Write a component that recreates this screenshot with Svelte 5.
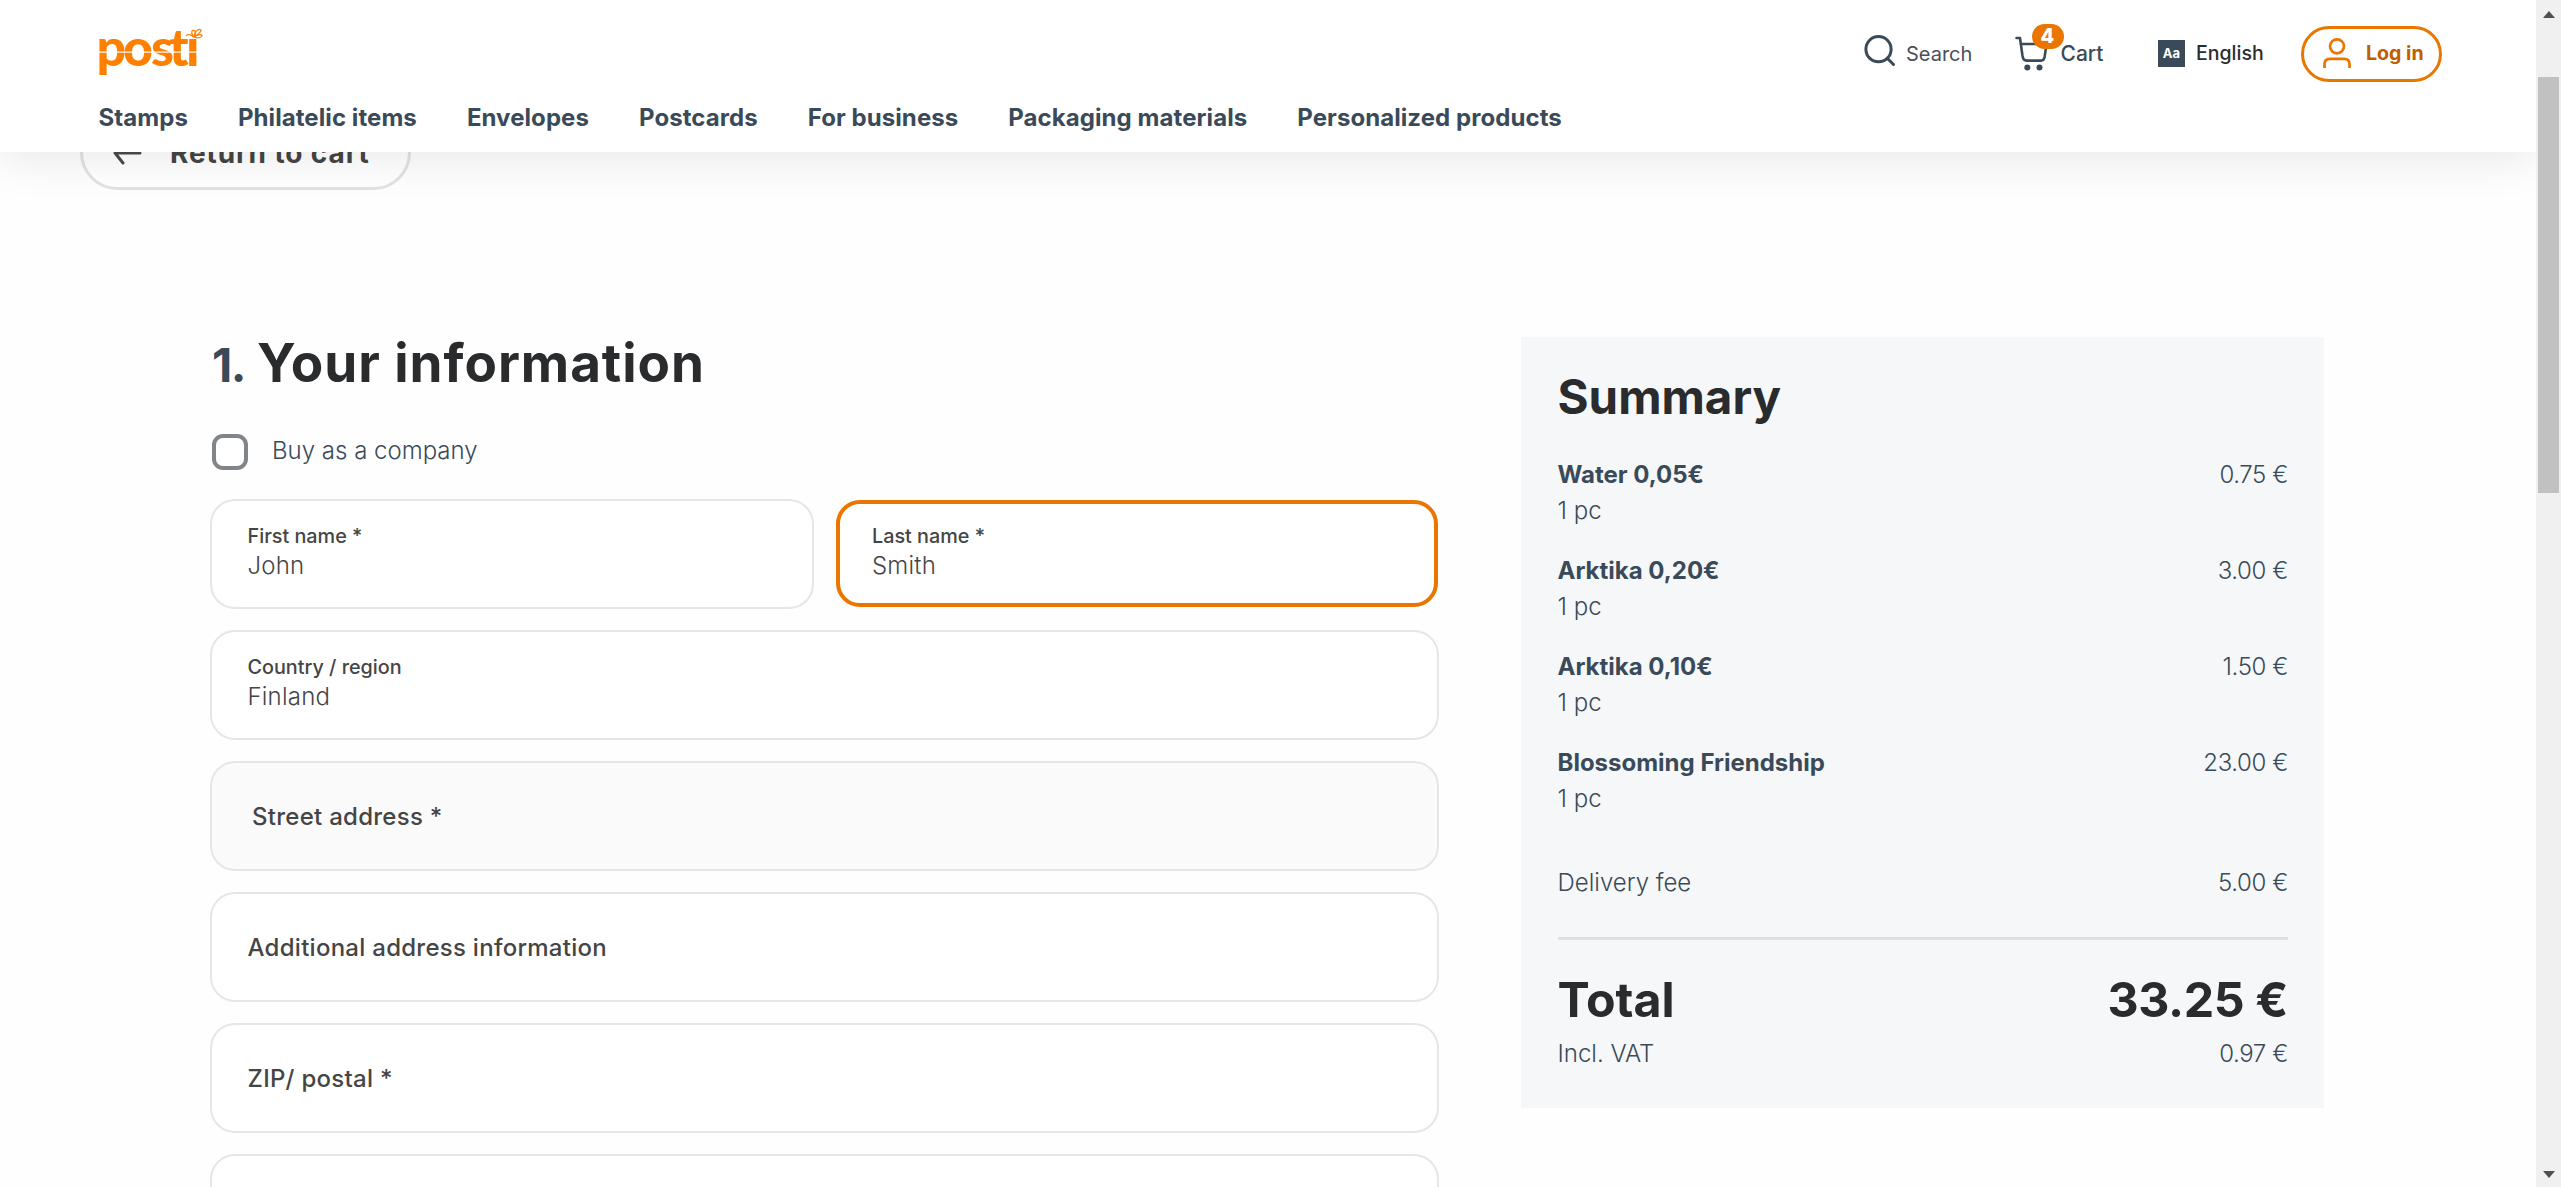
<script>
  const nav = [
    'Stamps',
    'Philatelic items',
    'Envelopes',
    'Postcards',
    'For business',
    'Packaging materials',
    'Personalized products',
  ];

  const items = [
    { name: 'Water 0,05€', qty: '1 pc', price: '0.75 €' },
    { name: 'Arktika 0,20€', qty: '1 pc', price: '3.00 €' },
    { name: 'Arktika 0,10€', qty: '1 pc', price: '1.50 €' },
    { name: 'Blossoming Friendship', qty: '1 pc', price: '23.00 €' },
  ];
</script>

<div class="viewport">
  <div class="page">
    <header>
      <div class="top">
        <svg class="logo" width="112" height="86" viewBox="-2 -16 112 86" aria-label="posti">
          <text class="wordmark" x="-2.5 24 52 70 87" y="43.500">posti</text>
          <rect x="89" y="-4" width="20" height="18.5" fill="#fff" />
          <rect x="-2" y="29.500" width="112" height="1.200" fill="#fff" />
          <g fill="none" stroke="#ff8000" stroke-width="1.300">
            <path d="M95 15 C91 10 93 7 96 9 C97 11 96 14 95 15" />
            <path d="M95 15 C99 12 103 12 103 14 C101 17 98 16 95 15" />
            <path d="M95 15 C95 10 99 6 102 8 C102 11 98 13 95 15" />
            <path d="M95 15 C92 12 88 12 87 14" />
          </g>
        </svg>

        <div class="tools">
          <a class="search" href="#search">
            <svg width="32" height="32" viewBox="0 0 32 32" fill="none" stroke="#3a4a58" stroke-width="3">
              <circle cx="14.500" cy="14.200" r="12.600" />
              <path d="M23.500 23.500 L29.500 29.500" stroke-linecap="round" />
            </svg>
            <span>Search</span>
          </a>
          <a class="cart" href="#cart">
            <span class="cart-icon">
              <svg width="34" height="36" viewBox="0 0 34 36" fill="none" stroke="#3a4a58" stroke-width="2.600" stroke-linecap="round" stroke-linejoin="round">
                <path d="M1.500 2 H5 L7.500 20 Q8.300 24.600 11.500 24.600 H26 Q29 24.600 29.700 20.500 L31.500 8 H6" />
                <circle cx="12.300" cy="31.500" r="3" fill="#3a4a58" stroke="none" />
                <circle cx="24.500" cy="31.500" r="3" fill="#3a4a58" stroke="none" />
              </svg>
              <b class="badge">4</b>
            </span>
            <span>Cart</span>
          </a>
          <a class="language" href="#language">
            <span class="glyph">Aa</span>
            <span>English</span>
          </a>
          <a class="login" href="#login">
            <svg width="30" height="32" viewBox="0 0 30 32" fill="none" stroke="#ea7600" stroke-width="2.700" stroke-linecap="butt">
              <circle cx="15" cy="9.300" r="7" />
              <path d="M2.500 31 V27 Q2.500 21.800 7.700 21.800 H22.300 Q27.500 21.800 27.500 27 V31" />
            </svg>
            <span>Log in</span>
          </a>
        </div>
      </div>
      <nav>
        {#each nav as label}<a href="#nav">{label}</a>{/each}
      </nav>
    </header>

    <main>
      <a class="return" href="#back">
        <svg width="30" height="24" viewBox="0 0 30 24" fill="none" stroke="#4a4a4a" stroke-width="3" stroke-linecap="round" stroke-linejoin="round">
          <path d="M27 12 H2 M10 2 L2 12 L10 22" />
        </svg>
        <span>Return to cart</span>
      </a>

      <div class="columns">
        <section class="form">
          <h1><span class="step">1.</span><span>Your information</span></h1>
          <div class="company"><span class="checkbox"></span><span>Buy as a company</span></div>
          <div class="fields">
            <div class="pair">
              <div class="field filled"><small>First name *</small><span class="value">John</span></div>
              <div class="field filled focused"><small>Last name *</small><span class="value">Smith</span></div>
            </div>
            <div class="field filled"><small>Country / region</small><span class="value">Finland</span></div>
            <div class="field hovered"><span class="placeholder">Street address *</span></div>
            <div class="field"><span class="placeholder">Additional address information</span></div>
            <div class="field"><span class="placeholder">ZIP/ postal *</span></div>
            <div class="field"></div>
          </div>
        </section>

        <aside>
          <h2>Summary</h2>
          <div class="items">
            {#each items as item}
              <div class="item">
                <div><b>{item.name}</b><span>{item.qty}</span></div>
                <span>{item.price}</span>
              </div>
            {/each}
          </div>
          <div class="row delivery"><span>Delivery fee</span><span>5.00 €</span></div>
          <div class="row total"><span>Total</span><span>33.25 €</span></div>
          <div class="row"><span>Incl. VAT</span><span>0.97 €</span></div>
        </aside>
      </div>
    </main>
  </div>

  <div class="scrollbar">
    <svg width="12" height="7" viewBox="0 0 12 7"><path d="M0 7 L6 0 L12 7 Z" fill="#505050" /></svg>
    <div class="thumb"></div>
    <svg width="12" height="7" viewBox="0 0 12 7"><path d="M0 0 L6 7 L12 0 Z" fill="#505050" /></svg>
  </div>
</div>

<style>
  :global(body) {
    background: #fefefe;
  }

  .viewport {
    display: flex;
    height: 1187px;
    overflow: hidden;
    background: #fefefe;
    font-family: Inter, 'Liberation Sans', sans-serif;
    font-size: 24px;
    font-weight: 350;
    line-height: 36px;
    color: #3a4a58;
  }

  .viewport :global(*) {
    box-sizing: border-box;
  }

  a {
    color: inherit;
    text-decoration: none;
    white-space: nowrap;
  }

  b {
    font-weight: 700;
  }

  svg {
    display: block;
    flex: none;
  }

  .page {
    width: 2536px;
    height: 1187px;
    overflow: hidden;
  }

  /* Header */
  header {
    position: relative;
    z-index: 1;
    height: 152px;
    background: #fff;
    box-shadow: 0 10px 40px rgba(0, 0, 0, 0.08);
  }

  .top {
    display: flex;
    justify-content: space-between;
    height: 100px;
    padding: 22px 94px 0 97px;
  }

  .logo {
    margin-top: -16px;
  }

  .wordmark {
    font-family: Lato, sans-serif;
    font-size: 52px;
    font-weight: 900;
    font-variant-ligatures: none;
    fill: #ff8000;
  }

  .tools {
    display: flex;
    align-items: center;
    height: 64px;
    font-size: 20px;
    line-height: 30px;
  }

  .search {
    display: flex;
    align-items: center;
    gap: 10px;
    width: 150.500px;
    font-weight: 400;
    color: #4a5058;
  }

  .search svg {
    margin-top: -6px;
  }

  .cart {
    display: flex;
    align-items: center;
    gap: 12px;
    width: 143.500px;
    font-weight: 500;
    font-size: 21px;
  }

  .cart-icon {
    position: relative;
  }

  .badge {
    position: absolute;
    left: 17px;
    top: -12px;
    width: 32px;
    height: 25px;
    border-radius: 13px;
    background: #ea7600;
    color: #fff;
    font-size: 20px;
    font-weight: 800;
    line-height: 25px;
    text-align: center;
  }

  .language {
    display: flex;
    align-items: center;
    gap: 11px;
    width: 143px;
    margin-top: -2px;
    font-size: 19.500px;
    font-weight: 500;
    color: #2b2c2e;
  }

  .glyph {
    width: 27px;
    height: 27px;
    background: #3a4a58;
    color: #fff;
    font-size: 13px;
    font-weight: 700;
    line-height: 27px;
    text-align: center;
  }

  .login {
    display: flex;
    align-items: center;
    gap: 14px;
    width: 141px;
    height: 56px;
    padding: 0 0 2px 18px;
    border: 3px solid #ea7600;
    border-radius: 28px;
    font-size: 19.600px;
    font-weight: 700;
    color: #c05f00;
  }

  nav {
    display: flex;
    gap: 50px;
    padding-left: 98.500px;
    font-weight: 700;
  }

  nav a {
    letter-spacing: 0.070px;
  }

  /* Page content */
  main {
    margin-top: -37px;
  }

  .return {
    display: flex;
    align-items: center;
    gap: 27px;
    width: 331px;
    height: 75px;
    margin-left: 80px;
    padding-left: 30px;
    border: 3px solid #e2e2e2;
    border-radius: 38px;
    background: #fff;
    font-size: 28px;
    font-weight: 700;
    letter-spacing: 0.900px;
    color: #454545;
  }

  .columns {
    display: flex;
    justify-content: space-between;
    align-items: flex-start;
    width: 2114px;
    margin: 147px 0 0 210px;
  }

  .form {
    width: 1228.500px;
  }

  h1,
  h2 {
    margin: 0;
    font-weight: 700;
    color: #2a2b2d;
  }

  h1 {
    display: flex;
    align-items: baseline;
    gap: 12px;
    height: 97px;
    padding-left: 2px;
    font-size: 53px;
    line-height: 53px;
    letter-spacing: 0.950px;
  }

  .step {
    font-size: 47px;
    letter-spacing: -1.500px;
    color: #3a4a58;
  }

  .company {
    display: flex;
    align-items: center;
    gap: 24px;
    height: 36px;
    margin-left: 2px;
  }

  .checkbox {
    width: 36px;
    height: 36px;
    border: 4px solid #818589;
    border-radius: 11px;
    background: #fff;
  }

  .company span:last-child {
    margin-top: -3px;
  }

  .fields {
    display: grid;
    gap: 21px;
    margin-top: 29px;
  }

  .pair {
    display: grid;
    grid-template-columns: 603.500px 603.500px;
    justify-content: space-between;
  }

  .field {
    display: flex;
    flex-direction: column;
    justify-content: center;
    height: 110px;
    padding-left: 35.500px;
    border: 2px solid #e6e6e6;
    border-radius: 25px;
    background: #fff;
    color: #454545;
  }

  .filled {
    padding-bottom: 6px;
  }

  .field small {
    font-size: 19.800px;
    font-weight: 500;
    line-height: 30px;
  }

  .value {
    line-height: 30px;
    letter-spacing: 0.200px;
  }

  .focused {
    height: 107px;
    margin: 1px;
    padding-left: 32px;
    padding-bottom: 5px;
    border: 4px solid #ea7600;
    border-radius: 24px;
  }

  .hovered {
    padding-left: 40px;
    background: #fafafa;
  }

  .placeholder {
    padding-top: 1px;
    font-weight: 500;
    letter-spacing: 0.270px;
  }

  /* Order summary */
  aside {
    width: 803px;
    height: 771px;
    padding: 35px 36px 0 36.500px;
    background: #f6f7f9;
  }

  h2 {
    font-size: 47.500px;
    line-height: 50px;
  }

  .items {
    display: grid;
    gap: 24px;
    margin-top: 35px;
  }

  .item {
    display: flex;
    justify-content: space-between;
    height: 72px;
  }

  .item div {
    display: grid;
  }

  .row {
    display: flex;
    justify-content: space-between;
  }

  .item > span,
  .row span:last-child {
    letter-spacing: -0.400px;
  }

  .delivery {
    height: 75px;
    margin-top: 48px;
    border-bottom: 3px solid #dce1e8;
  }

  .total {
    height: 96px;
    padding-top: 30px;
    font-size: 48.300px;
    font-weight: 700;
    line-height: 60px;
    color: #2a2b2d;
  }

  /* Scrollbar */
  .scrollbar {
    display: flex;
    flex-direction: column;
    align-items: center;
    width: 25px;
    height: 1187px;
    padding: 11px 0 9px;
    background: #f0f0f0;
  }

  .thumb {
    width: 21px;
    height: 416px;
    margin: 59px 0 auto;
    background: #c1c1c1;
  }
</style>
